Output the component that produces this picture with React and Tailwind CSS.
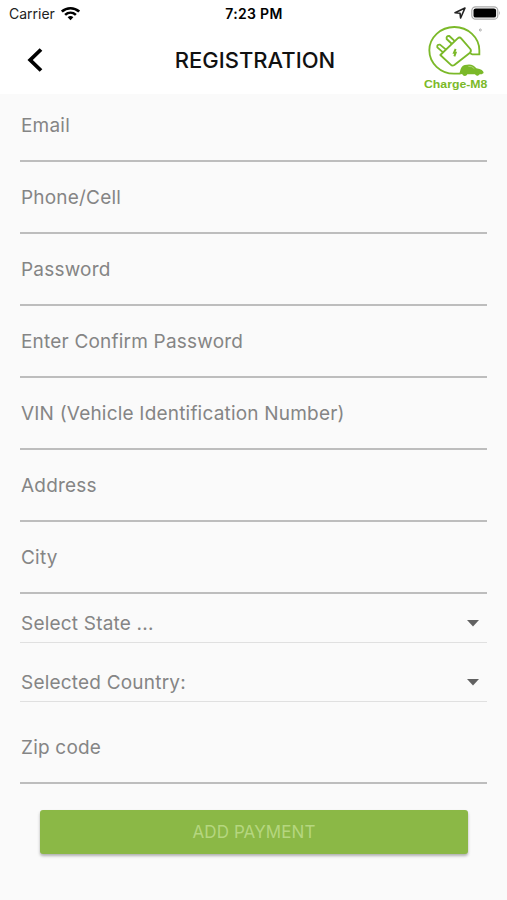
import clsx from 'clsx';

const fields = [
  'Email',
  'Phone/Cell',
  'Password',
  'Enter Confirm Password',
  'VIN (Vehicle Identification Number)',
  'Address',
  'City',
];

function StatusBar() {
  return (
    <div className="grid h-7 grid-cols-3 items-center pr-[6px] pl-[9px] text-[14px] leading-none text-[#222]">
      <div className="flex items-center gap-[6px]">
        <span>Carrier</span>
        <svg className="-mt-[2px]" width="19" height="15" viewBox="0 0 18 14" fill="none" stroke="#000" strokeWidth="2.5">
          <path d="M.8 5.2C5.5 .9 12.5 .9 17.2 5.2" />
          <path d="M3.9 8.3C6.9 5.6 11.1 5.6 14.1 8.3" />
          <path d="M6.3 10.5C7.9 9.1 10.1 9.1 11.7 10.5L9 13.3Z" fill="#000" stroke="none" />
        </svg>
      </div>
      <span className="pr-[2px] text-center font-semibold tracking-[0.3px] whitespace-nowrap text-black">
        7:23 PM
      </span>
      <div className="-mt-[2px] flex items-center justify-end gap-[5px]">
        <svg width="12" height="12" viewBox="0 0 12 12" fill="none" stroke="#222" strokeWidth="1.6" strokeLinejoin="round">
          <path d="M1 5.8 11 1 6.6 11 6 6.2Z" />
        </svg>
        <svg width="30" height="14" viewBox="0 0 30 14">
          <rect x=".8" y=".8" width="26" height="12.4" rx="3.8" fill="#fff" stroke="#aaa" strokeWidth="1.2" />
          <rect x="2.5" y="2.4" width="22.6" height="9.2" rx="2.2" fill="#000" />
          <path d="M28 4.8Q29.8 7 28 9.2Z" fill="#aaa" />
        </svg>
      </div>
    </div>
  );
}

function Logo() {
  return (
    <svg width="69" height="68" viewBox="24 15 207 204" fill="none" stroke="#7bb929" strokeWidth="5.5">
      <path d="M137 161H117A74 70 0 0 1 43 91A75 70 0 0 1 118 21A75 70 0 0 1 193 91V103H172Q168 102 164 97" />
      <path
        d="M76 105 128 55Q134 50 139 56L166 87Q170 93 165 98L118 135Q112 139 107 134L76 105Z"
        strokeLinejoin="round"
      />
      <path d="M84 97 67 82Q65 73 75 74L93 89M111 72 95 57Q93 47 103 48L120 64" strokeLinejoin="round" />
      <path d="M122 87 117 98H122L118 109" strokeWidth="6" />
      <path
        d="M133 161 137 147Q141 134 156 134Q174 131 184 145Q206 149 206 159L200 163H194A8 8 0 0 1 180 163H157A8 8 0 0 1 142 163Z"
        fill="#7bb929"
        stroke="none"
      />
      <circle cx="149" cy="161" r="5" fill="#7bb929" stroke="none" />
      <circle cx="187" cy="161" r="5" fill="#7bb929" stroke="none" />
      <path d="M160 139Q172 138 178 146" stroke="#c4df9d" strokeWidth="2" />
      <circle cx="196" cy="30" r="3" stroke="#aaa" strokeWidth="3" />
      <text
        x="27"
        y="203"
        fill="#7bb929"
        stroke="none"
        fontSize="31"
        fontWeight="700"
        textLength="190"
        lengthAdjust="spacingAndGlyphs"
        className="font-['Liberation_Sans',sans-serif]"
      >
        Charge-M8
      </text>
    </svg>
  );
}

function Header() {
  return (
    <header className="h-[94px] bg-white">
      <StatusBar />
      <div className="grid h-[66px] grid-cols-[1fr_auto_1fr] items-start">
        <button className="mt-5 ml-[27px] h-6 w-4" aria-label="Back">
          <svg width="16" height="24" viewBox="0 0 16 24" fill="none" stroke="#000" strokeWidth="3.8">
            <path d="M14 1.5 3.2 12 14 22.5" />
          </svg>
        </button>
        <h1 className="mt-[18px] pl-[3px] text-[22px] leading-7 font-medium text-[#111]">REGISTRATION</h1>
        <div className="-mt-[3px] mr-[15px] flex justify-end">
          <Logo />
        </div>
      </div>
    </header>
  );
}

function Field({ label, className }) {
  return (
    <div className={clsx('mb-[6px] h-[66px] border-b-2 border-[#bdbdbd] pt-[17px]', className)}>
      <label className="block pl-px leading-[26px]">{label}</label>
    </div>
  );
}

function Select({ label, className }) {
  return (
    <div className={clsx('flex justify-between border-b border-[#e0e0e0] pr-2', className)}>
      <span className="pl-px leading-[26px]">{label}</span>
      <svg className="mt-[9px]" width="12" height="7" viewBox="0 0 12 7">
        <path d="M0 0H12L6 6.5Z" fill="#616161" />
      </svg>
    </div>
  );
}

export default function App() {
  return (
    <div className="h-[900px] w-full overflow-hidden bg-[#fafafa] font-[Inter,sans-serif]">
      <Header />
      <main className="px-5 pt-[2px] text-[19px] tracking-[0.2px] text-[#858585]">
        {fields.map((label) => (
          <Field key={label} label={label} />
        ))}
        <Select label="Select State ..." className="mt-[17px] h-8" />
        <Select label="Selected Country:" className="mt-[27px] h-8" />
        <Field label="Zip code" className="mt-4" />
        <button className="mx-5 mt-[26px] block h-11 w-[428px] rounded-[3px] bg-[#8bb846] pt-px text-[17px] tracking-[0.1px] text-[#b5d67f] shadow-[0_2px_3px_rgba(0,0,0,0.3)]">
          ADD PAYMENT
        </button>
      </main>
    </div>
  );
}
